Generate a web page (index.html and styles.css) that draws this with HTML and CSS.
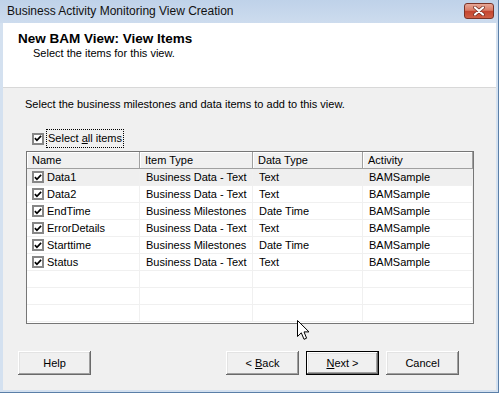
FILE: index.html
```html
<!DOCTYPE html>
<html>
<head>
    <link rel="stylesheet" href="styles.css">
</head>
<body>
    <div class="window">
        <div class="titlebar">
            <span class="title">Business Activity Monitoring View Creation</span>
            <div class="close-btn">
                <svg width="12" height="10" viewBox="0 0 12 10">
                    <path d="M2 1.5 L10 8.5 M10 1.5 L2 8.5" stroke="#6b2a1f" stroke-width="3.6" stroke-linecap="round"/>
                    <path d="M2 1.5 L10 8.5 M10 1.5 L2 8.5" stroke="#fff" stroke-width="2.2" stroke-linecap="round"/>
                </svg>
            </div>
        </div>

        <div class="client">
            <div class="banner">
                <h1>New BAM View: View Items</h1>
                <p>Select the items for this view.</p>
            </div>

            <div class="content">
                <p class="intro">Select the business milestones and data items to add to this view.</p>

                <div class="select-all">
                    <span class="check"><svg width="9" height="9" viewBox="0 0 9 9"><path d="M1 4 L3.3 6.5 L8 1.5" fill="none" stroke="#000" stroke-width="1.9"/></svg></span>
                    <span class="focus">Select <u>a</u>ll items</span>
                </div>

                <div class="list">
                    <div class="list-head">
                        <div class="cell">Name</div>
                        <div class="cell">Item Type</div>
                        <div class="cell">Data Type</div>
                        <div class="cell">Activity</div>
                    </div>
                    <div class="list-row first">
                        <div class="cell"><span class="check"><svg width="9" height="9" viewBox="0 0 9 9"><path d="M1 4 L3.3 6.5 L8 1.5" fill="none" stroke="#000" stroke-width="1.9"/></svg></span>Data1</div>
                        <div class="cell">Business Data - Text</div>
                        <div class="cell">Text</div>
                        <div class="cell">BAMSample</div>
                    </div>
                    <div class="list-row">
                        <div class="cell"><span class="check"><svg width="9" height="9" viewBox="0 0 9 9"><path d="M1 4 L3.3 6.5 L8 1.5" fill="none" stroke="#000" stroke-width="1.9"/></svg></span>Data2</div>
                        <div class="cell">Business Data - Text</div>
                        <div class="cell">Text</div>
                        <div class="cell">BAMSample</div>
                    </div>
                    <div class="list-row">
                        <div class="cell"><span class="check"><svg width="9" height="9" viewBox="0 0 9 9"><path d="M1 4 L3.3 6.5 L8 1.5" fill="none" stroke="#000" stroke-width="1.9"/></svg></span>EndTime</div>
                        <div class="cell">Business Milestones</div>
                        <div class="cell">Date Time</div>
                        <div class="cell">BAMSample</div>
                    </div>
                    <div class="list-row">
                        <div class="cell"><span class="check"><svg width="9" height="9" viewBox="0 0 9 9"><path d="M1 4 L3.3 6.5 L8 1.5" fill="none" stroke="#000" stroke-width="1.9"/></svg></span>ErrorDetails</div>
                        <div class="cell">Business Data - Text</div>
                        <div class="cell">Text</div>
                        <div class="cell">BAMSample</div>
                    </div>
                    <div class="list-row">
                        <div class="cell"><span class="check"><svg width="9" height="9" viewBox="0 0 9 9"><path d="M1 4 L3.3 6.5 L8 1.5" fill="none" stroke="#000" stroke-width="1.9"/></svg></span>Starttime</div>
                        <div class="cell">Business Milestones</div>
                        <div class="cell">Date Time</div>
                        <div class="cell">BAMSample</div>
                    </div>
                    <div class="list-row">
                        <div class="cell"><span class="check"><svg width="9" height="9" viewBox="0 0 9 9"><path d="M1 4 L3.3 6.5 L8 1.5" fill="none" stroke="#000" stroke-width="1.9"/></svg></span>Status</div>
                        <div class="cell">Business Data - Text</div>
                        <div class="cell">Text</div>
                        <div class="cell">BAMSample</div>
                    </div>
                    <div class="list-row">
                        <div class="cell"></div><div class="cell"></div><div class="cell"></div><div class="cell"></div>
                    </div>
                    <div class="list-row">
                        <div class="cell"></div><div class="cell"></div><div class="cell"></div><div class="cell"></div>
                    </div>
                    <div class="list-row">
                        <div class="cell"></div><div class="cell"></div><div class="cell"></div><div class="cell"></div>
                    </div>
                </div>

                <div class="buttons">
                    <div class="btn"><span>Help</span></div>
                    <div class="btn back"><span>&lt; <u>B</u>ack</span></div>
                    <div class="btn default"><span><u>N</u>ext &gt;</span></div>
                    <div class="btn"><span>Cancel</span></div>
                </div>
            </div>
        </div>

        <!-- mouse pointer sitting over the dialog -->
        <svg class="cursor" width="13" height="21" viewBox="0 0 13 21">
            <path d="M0.5 0.5 L0.5 16.5 L4.3 12.8 L7 19.3 L9.6 18.2 L7 11.9 L12 11.9 Z" fill="#fff" stroke="#000" stroke-width="1" stroke-linejoin="miter"/>
        </svg>
    </div>
</body>
</html>
```

FILE: styles.css
```css
body {
    margin: 0;
    background: #fff;
    font-family: "Liberation Sans", Arial, sans-serif;
    font-size: 11px;
    color: #000;
}

.window {
    position: relative;
    width: 499px;
    height: 393px;
    box-sizing: border-box;
    display: flex;
    flex-direction: column;
    background: #d4e1f0;
    border-right: 1px solid #5a7fa8;
    border-bottom: 1px solid #5a7fa8;
}

.titlebar {
    height: 23px;
    flex: none;
    display: flex;
    align-items: flex-start;
    padding: 0 4px 0 7px;
    background: linear-gradient(#bfd2e9, #cddcee);
}

.title {
    font-size: 12px;
    line-height: 23px;
    color: #111;
}

.close-btn {
    margin-left: auto;
    margin-top: 3px;
    width: 30px;
    height: 16px;
    box-sizing: border-box;
    border: 1px solid #7a3327;
    border-radius: 3px;
    background: linear-gradient(#e7a797 0%, #d97b65 45%, #c4452f 52%, #cf5f45 100%);
    display: flex;
    align-items: center;
    justify-content: center;
}

.client {
    flex: 1;
    margin: 0 2px 2px 3px;
    display: flex;
    flex-direction: column;
    background: #f0f0f0;
}

.banner {
    flex: none;
    height: 65px;
    box-sizing: border-box;
    background: #fff;
    border-bottom: 1px solid #d8d8d8;
    padding: 8px 0 0 15px;
}

.banner h1 {
    margin: 0;
    font-size: 13.5px;
    line-height: 16px;
    font-weight: bold;
}

.banner p {
    margin: 0 0 0 15px;
    line-height: 13px;
}

.content {
    flex: 1;
    display: flex;
    flex-direction: column;
    padding-top: 9px;
}

.intro {
    margin: 0 0 0 22px;
    line-height: 14px;
}

.select-all {
    display: flex;
    align-items: center;
    margin: 18px 0 0 29px;
    height: 19px;
}

.check {
    width: 12px;
    height: 12px;
    box-sizing: border-box;
    border: 2px solid #868686;
    background: #fff;
    display: inline-flex;
    align-items: center;
    justify-content: center;
    flex: none;
}

.focus {
    margin-left: 2px;
    border: 1px dotted #000;
    padding: 0 1px;
    line-height: 17px;
}

.list {
    margin: 3px 0 0 23px;
    width: 448px;
    height: 173px;
    box-sizing: border-box;
    border: 1px solid #767676;
    background: #fff;
    overflow: hidden;
}

.list-head,
.list-row {
    display: grid;
    grid-template-columns: 113px 113px 110px 110px;
}

.list-head .cell {
    height: 17px;
    box-sizing: border-box;
    background: #f0f0f0;
    border-right: 1px solid #a0a0a0;
    border-bottom: 1px solid #a0a0a0;
    box-shadow: inset 1px 1px 0 #fff;
    padding-left: 5px;
    line-height: 16px;
}

.list-row .cell {
    height: 17px;
    box-sizing: border-box;
    border-right: 1px solid #f0f0f0;
    border-bottom: 1px solid #f0f0f0;
    padding-left: 6px;
    line-height: 16px;
    display: flex;
    align-items: center;
    white-space: nowrap;
}

.list-row .cell:first-child {
    padding-left: 5px;
}

.list-row .check {
    margin-right: 3px;
}

.list-row.first {
    background: #efefef;
}

.buttons {
    display: flex;
    margin: 27px 0 0 15px;
}

.btn {
    width: 73px;
    height: 24px;
    box-sizing: border-box;
    margin-right: 7px;
    background: #f0f0f0;
    box-shadow: inset -1px -1px 0 #6a6a6a, inset 1px 1px 0 #fff, inset -2px -2px 0 #a0a0a0, inset 2px 2px 0 #e3e3e3;
    display: flex;
    align-items: center;
    justify-content: center;
    line-height: 14px;
}

.btn.back {
    margin-left: 128px;
}

.btn.default {
    border: 1px solid #000;
}

.cursor {
    position: absolute;
    left: 297px;
    top: 320px;
}
```
